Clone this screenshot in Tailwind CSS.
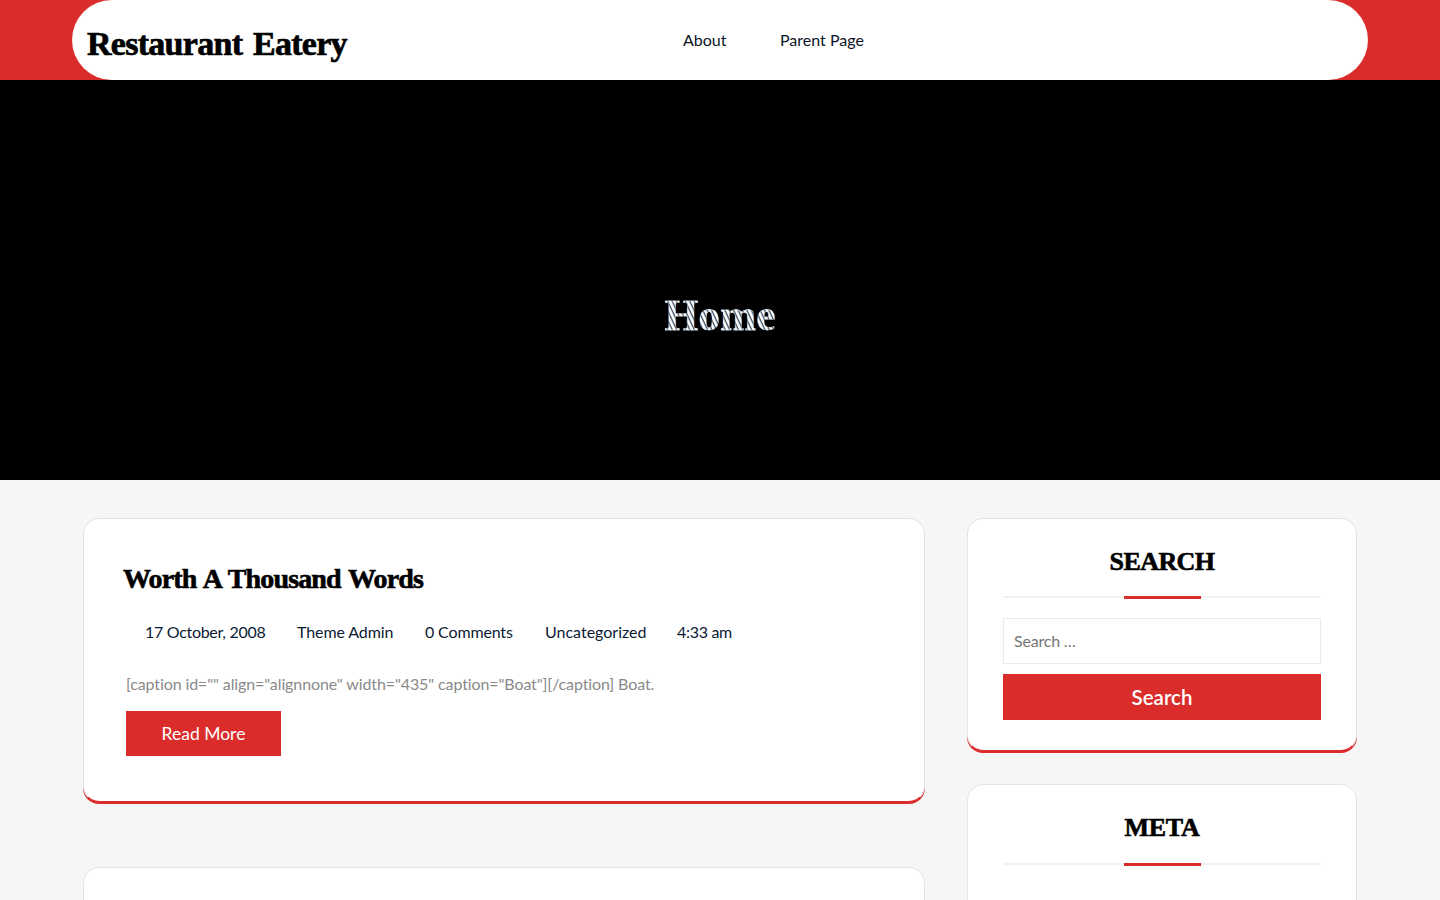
<!DOCTYPE html>
<html lang="en">
<head>
    <meta charset="UTF-8">
    <meta name="viewport" content="width=device-width, initial-scale=1.0">
    <title>Restaurant Eatery</title>
    <script src="https://cdn.jsdelivr.net/npm/@tailwindcss/browser@4"></script>
</head>
<body class="bg-[#f6f6f6] h-screen overflow-hidden font-['Lato',sans-serif] text-base">
    <!-- Header -->
    <header class="bg-[#db2c2c] h-20 px-[72px]">
        <div class="bg-white h-20 rounded-[40px] flex items-center pl-[15px]">
            <a href="#" class="w-[596px] font-['Liberation_Serif',serif] font-bold text-[34px] leading-none text-black pt-2 tracking-[-0.72px] [word-spacing:3px] [-webkit-text-stroke:0.7px_black]">Restaurant Eatery</a>
            <nav class="flex gap-[53.5px] text-[#0b1526] -mt-[1px]">
                <a href="#">About</a>
                <a href="#">Parent Page</a>
            </nav>
        </div>
    </header>

    <!-- Hero -->
    <section class="bg-black h-[400px] flex items-center justify-center">
        <h1 class="font-['Liberation_Serif',serif] font-bold text-[43.5px] leading-none mt-[72px] text-transparent bg-clip-text bg-[repeating-linear-gradient(65deg,#ffffff_0px,#ffffff_1.5px,#7f9ab4_2.5px,#3a3f46_3px,#eef3f8_4px)] [-webkit-text-stroke:0.3px_#e3edf5]">Home</h1>
    </section>

    <!-- Content -->
    <main class="flex items-start gap-[42px] px-[83px] pt-[38px]">
        <div class="w-[842px] flex flex-col gap-[65px]">
            <article class="bg-white h-[284px] rounded-2xl border border-[#e4e4e4] border-b-[#db2c2c] shadow-[0_2px_0_#db2c2c] pt-[43px] pl-[39px]">
                <h2 class="font-['Liberation_Serif',serif] font-bold text-[28px] leading-[34px] text-black tracking-[-0.84px] [word-spacing:1.5px] [-webkit-text-stroke:0.6px_black]">Worth A Thousand Words</h2>
                <div class="flex mt-[24px] pl-[22px] text-[#0b1a33] leading-[24px]">
                    <span class="w-[152px] tracking-[-0.3px]">17 October, 2008</span>
                    <span class="w-[128px] tracking-[-0.1px]">Theme Admin</span>
                    <span class="w-[120px] tracking-[-0.15px]">0 Comments</span>
                    <span class="w-[132px]">Uncategorized</span>
                    <span class="tracking-[-0.3px]">4:33 am</span>
                </div>
                <p class="mt-[28px] ml-[3px] text-[#8a8a8a] leading-[24px] tracking-[-0.11px]">[caption id="" align="alignnone" width="435" caption="Boat"][/caption] Boat.</p>
                <a href="#" class="mt-[15px] ml-[3px] w-[155px] h-[45px] pt-px flex items-center justify-center bg-[#db2c2c] text-white text-[17.5px]">Read More</a>
            </article>
            <article class="bg-white h-[286px] rounded-2xl border border-[#e4e4e4]"></article>
        </div>

        <aside class="w-[390px] flex flex-col gap-[33px]">
            <section class="bg-white h-[233px] rounded-2xl border border-[#e4e4e4] border-b-[#db2c2c] shadow-[0_2px_0_#db2c2c] px-[35px] pt-[27px]">
                <h3 class="font-['Liberation_Serif',serif] font-bold text-[26px] leading-[32px] text-black text-center tracking-[-0.6px] [-webkit-text-stroke:0.6px_black]">SEARCH</h3>
                <div class="relative mt-[18px] h-[2px] bg-[#f1f1f1]">
                    <div class="absolute left-[121px] top-0 w-[77px] h-[3px] bg-[#db2c2c]"></div>
                </div>
                <input type="text" placeholder="Search …" class="mt-[20px] w-full h-[46px] pb-px border border-[#ebebeb] px-[10px] text-base tracking-[-0.2px] placeholder:text-[#757575] outline-none">
                <button class="mt-[10px] w-full h-[46px] bg-[#db2c2c] text-white text-[20.5px] font-semibold">Search</button>
            </section>
            <section class="bg-white h-[235px] rounded-2xl border border-[#e4e4e4] px-[35px] pt-[27px]">
                <h3 class="font-['Liberation_Serif',serif] font-bold text-[26px] leading-[32px] text-black text-center tracking-[-0.3px] [-webkit-text-stroke:0.6px_black]">META</h3>
                <div class="relative mt-[19px] h-[2px] bg-[#f1f1f1]">
                    <div class="absolute left-[121px] top-0 w-[77px] h-[3px] bg-[#db2c2c]"></div>
                </div>
            </section>
        </aside>
    </main>
</body>
</html>
